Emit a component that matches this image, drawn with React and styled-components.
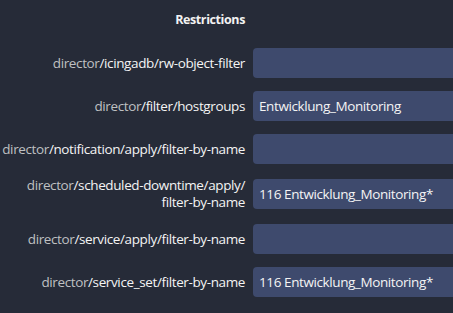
import React from 'react'
import styled, { createGlobalStyle } from 'styled-components'

const GlobalStyle = createGlobalStyle`
  html, body {
    margin: 0;
    padding: 0;
    background: #262b38;
    overflow: hidden;
  }
  body {
    font-family: "Open Sans", "Liberation Sans", sans-serif;
  }
`

const Form = styled.div`
  display: grid;
  grid-template-columns: 245px 1fr;
  column-gap: 8px;
  row-gap: 13px;
  align-items: center;
  padding-top: 8px;
`

const Heading = styled.div`
  grid-column: 1;
  text-align: right;
  font-weight: 700;
  font-size: 12.5px;
  letter-spacing: -0.4px;
  color: #f2f2f2;
  height: 27px;
  line-height: 24px;
`

const Spacer = styled.div``

const Label = styled.label`
  text-align: right;
  white-space: nowrap;
  font-size: 13.5px;
  letter-spacing: -0.38px;
  line-height: 17px;
  color: #f4f4f4;
`

const Prefix = styled.span`
  color: #bfc0c2;
`

/* field continues past the window edge, so only the left corners are rounded */
const Input = styled.div`
  height: 30px;
  box-sizing: border-box;
  background: #3e4a6d;
  border-radius: 4px 0 0 4px;
  padding: 0 6px;
  display: flex;
  align-items: center;
  white-space: nowrap;
  font-size: 13.5px;
  letter-spacing: -0.4px;
  color: #f4f4f4;
`

const rows = [
  ['/icingadb/rw-object-filter', ''],
  ['/filter/hostgroups', 'Entwicklung_Monitoring'],
  ['/notification/apply/filter-by-name', ''],
  ['/scheduled-downtime/apply/\nfilter-by-name', '116 Entwicklung_Monitoring*'],
  ['/service/apply/filter-by-name', ''],
  ['/service_set/filter-by-name', '116 Entwicklung_Monitoring*'],
]

export default function App() {
  return (
    <>
      <GlobalStyle />
      <Form>
        <Heading>Restrictions</Heading>
        <Spacer />
        {rows.map(([path, value]) => {
          const parts = path.split('\n')
          return (
            <React.Fragment key={path}>
              <Label>
                <Prefix>director</Prefix>
                {parts[0]}
                {parts[1] && <><br />{parts[1]}</>}
              </Label>
              <Input>{value}</Input>
            </React.Fragment>
          )
        })}
      </Form>
    </>
  )
}
